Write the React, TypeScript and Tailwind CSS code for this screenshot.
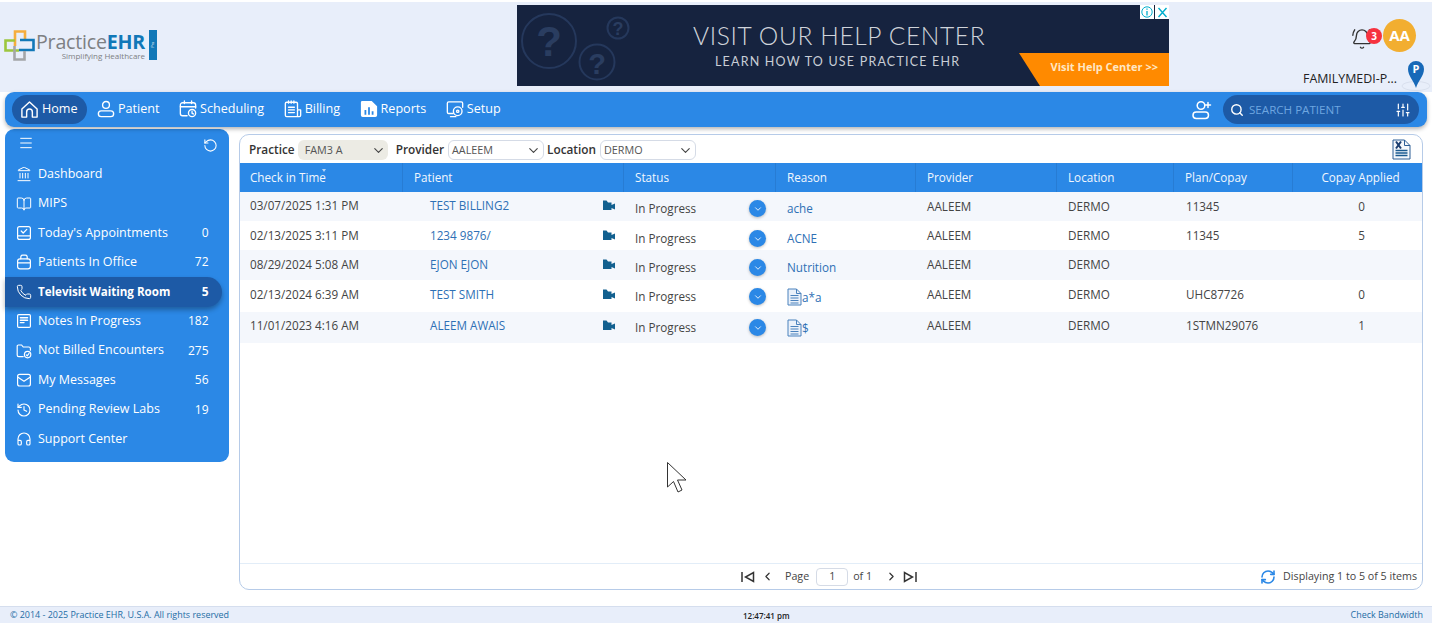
import React from "react";
import {
  Menu, RotateCcw, Landmark, BookOpen, Phone, History, Headphones, Search, SlidersVertical,
  BellRing, ChevronDown, ChevronLeft, ChevronRight, RefreshCw,
} from "lucide-react";

type IP = { size?: number; className?: string };
const Sv = ({ size = 18, className = "", children }: IP & { children: React.ReactNode }) => (
  <svg width={size} height={size} viewBox="0 0 20 20" fill="none" stroke="currentColor" strokeWidth="1.5" strokeLinecap="round" strokeLinejoin="round" className={`shrink-0 ${className}`}>
    {children}
  </svg>
);

const HomeI = (p: IP) => <Sv {...p}><path d="M2 9.5 L10 2 L18 9.5 V18 H13 V12.5 A3 3 0 0 0 7 12.5 V18 H2 Z" /></Sv>;
const PatientI = (p: IP) => <Sv {...p}><circle cx="10" cy="5.5" r="3.8" /><rect x="1.5" y="12" width="17" height="6.5" rx="3.2" /></Sv>;
const SchedI = (p: IP) => <Sv {...p}><path d="M9 17.5 H4 A2.5 2.5 0 0 1 1.5 15 V5.5 A2.5 2.5 0 0 1 4 3 H16 A2.5 2.5 0 0 1 18.5 5.5 V9" /><path d="M1.5 7.5 H18.5 M6 1 V4 M14 1 V4" /><circle cx="14.5" cy="14.5" r="4" /><path d="M14.5 12.8 V14.8 L16 15.5" /></Sv>;
const BillI = (p: IP) => <Sv {...p}><path d="M15 10 V4 A1.5 1.5 0 0 0 13.5 2.5 H3 A1.5 1.5 0 0 0 1.5 4 V17 A1.5 1.5 0 0 0 3 18.5 H17 A1.5 1.5 0 0 0 18.5 17 V11 H15 V18" /><path d="M5 1 V3.5 M8 1 V3.5 M11 1 V3.5 M5 8 H11.5 M5 11 H11.5 M5 14 H11.5" /></Sv>;
const ReportI = ({ size = 18, className = "" }: IP) => (
  <svg width={size} height={size} viewBox="0 0 20 20" className={`shrink-0 ${className}`}>
    <path fillRule="evenodd" d="M2.5 1 H13 L19 7 V17 A2 2 0 0 1 17 19 H3 A2 2 0 0 1 1 17 V2.5 A1.5 1.5 0 0 1 2.5 1 Z M5 11 V16.5 H7 V11 Z M9 8 V16.5 H11 V8 Z M13 12.5 V16.5 H15 V12.5 Z" fill="currentColor" />
  </svg>
);
const SetupI = (p: IP) => <Sv {...p}><path d="M8 15 H3 A1.5 1.5 0 0 1 1.5 13.5 V3.5 A1.5 1.5 0 0 1 3 2 H17 A1.5 1.5 0 0 1 18.5 3.5 V8" /><circle cx="13" cy="12.5" r="4.8" /><circle cx="13" cy="12.5" r="1.3" /><path d="M5 18.5 H11" /></Sv>;
const AddI = (p: IP) => <Sv {...p}><circle cx="9" cy="5.5" r="3.8" /><rect x="1" y="12" width="15.5" height="6.5" rx="3.2" /><path d="M16 2.5 V7.5 M13.5 5 H18.5" /></Sv>;
const ApptI = (p: IP) => <Sv {...p}><rect x="2" y="2" width="16" height="16" rx="2.5" /><path d="M2 13.5 H18 M6.5 7.5 L9 10 L13.5 5.5" /></Sv>;
const BagI = (p: IP) => <Sv {...p}><rect x="2" y="6" width="16" height="12.5" rx="3" /><path d="M6 6 V4 A2.5 2.5 0 0 1 8.5 1.5 H11.5 A2.5 2.5 0 0 1 14 4 V6 M2 11 H18" /></Sv>;
const NotesI = (p: IP) => <Sv {...p}><rect x="2" y="2" width="16" height="16" rx="1.5" /><path d="M5.5 6 H14.5 M5.5 9 H14.5 M5.5 12 H10" strokeWidth="1.8" /></Sv>;
const FolderI = (p: IP) => <Sv {...p}><path d="M9 17 H3.5 A2 2 0 0 1 1.5 15 V4 A1.5 1.5 0 0 1 3 2.5 H7 L9 5 H16 A2 2 0 0 1 18 7 V9" /><circle cx="14.5" cy="14.5" r="4" /><path d="M12.8 14.8 L14 16 L16.3 13" /></Sv>;
const MailI = (p: IP) => <Sv {...p}><rect x="2" y="3" width="16" height="14.5" rx="2.5" /><path d="M2.5 6.5 L10 11.5 L17.5 6.5" /></Sv>;

const nav = [
  { label: "Patient", Icon: PatientI },
  { label: "Scheduling", Icon: SchedI },
  { label: "Billing", Icon: BillI },
  { label: "Reports", Icon: ReportI },
  { label: "Setup", Icon: SetupI },
];

const side: { label: string; Icon: any; n: string; active?: boolean }[] = [
  { label: "Dashboard", Icon: (p: IP) => <Landmark size={p.size} strokeWidth={1.5} className="shrink-0" />, n: "" },
  { label: "MIPS", Icon: (p: IP) => <BookOpen size={p.size} strokeWidth={1.5} className="shrink-0" />, n: "" },
  { label: "Today's Appointments", Icon: ApptI, n: "0" },
  { label: "Patients In Office", Icon: BagI, n: "72" },
  { label: "Televisit Waiting Room", Icon: (p: IP) => <Phone size={p.size} strokeWidth={1.5} className="shrink-0" />, n: "5", active: true },
  { label: "Notes In Progress", Icon: NotesI, n: "182" },
  { label: "Not Billed Encounters", Icon: FolderI, n: "275" },
  { label: "My Messages", Icon: MailI, n: "56" },
  { label: "Pending Review Labs", Icon: (p: IP) => <History size={p.size} strokeWidth={1.7} className="shrink-0" />, n: "19" },
  { label: "Support Center", Icon: (p: IP) => <Headphones size={p.size} strokeWidth={1.7} className="shrink-0" />, n: "" },
];

const rows = [
  { h: "h-[29px]", bg: "bg-[#f4f7fc]", t: "03/07/2025 1:31 PM", p: "TEST BILLING2", r: "ache", doc: false, pl: "11345", c: "0", pt: "pt-[5px]", opt: "pt-[6px]", spt: "pt-[8px]" },
  { h: "h-[29px]", bg: "bg-white", t: "02/13/2025 3:11 PM", p: "1234 9876/", r: "ACNE", doc: false, pl: "11345", c: "5", pt: "pt-[6px]", opt: "pt-[6px]", spt: "pt-[9px]" },
  { h: "h-[30px]", bg: "bg-[#f4f7fc]", t: "08/29/2024 5:08 AM", p: "EJON EJON", r: "Nutrition", doc: false, pl: "", c: "", pt: "pt-[6px]", opt: "pt-[6px]", spt: "pt-[9px]" },
  { h: "h-[32px]", bg: "bg-white", t: "02/13/2024 6:39 AM", p: "TEST SMITH", r: "a*a", doc: true, pl: "UHC87726", c: "0", pt: "pt-[6px]", opt: "pt-[6px]", spt: "pt-[8px]" },
  { h: "h-[31px]", bg: "bg-[#f4f7fc]", t: "11/01/2023 4:16 AM", p: "ALEEM AWAIS", r: "$", doc: true, pl: "1STMN29076", c: "1", pt: "pt-[5px]", opt: "pt-[5px]", spt: "pt-[7px]" },
];

const heads = [
  { label: "Check in Time", w: "w-[163px]" },
  { label: "Patient", w: "w-[221px]" },
  { label: "Status", w: "w-[152px]" },
  { label: "Reason", w: "w-[140px]" },
  { label: "Provider", w: "w-[141px]" },
  { label: "Location", w: "w-[117px]" },
  { label: "Plan/Copay", w: "w-[119px]" },
  { label: "Copay Applied", w: "w-[129px]" },
];

function Cam() {
  return (
    <svg width="12" height="11" viewBox="0 0 12 11" className="shrink-0">
      <path d="M0 0.5 H3.5 L5 2.5 H8.5 V5 L12 3.5 V9.5 L8.5 8 V10 H0 Z" fill="#12608f" />
    </svg>
  );
}

function Doc() {
  return (
    <svg width="15" height="18" viewBox="0 0 15 18" className="shrink-0">
      <path d="M1 1 H9.5 L14 5.5 V17 H1 Z" fill="#eaf1fa" stroke="#4b82bd" strokeWidth="1" />
      <path d="M9.5 1 V5.5 H14" fill="none" stroke="#4b82bd" />
      <path d="M3.5 7.5H11.5M3.5 10H11.5M3.5 12.5H11.5M3.5 15H11.5" stroke="#4b82bd" strokeWidth="1" />
    </svg>
  );
}

function Logo() {
  return (
    <div className="flex items-start ml-[4px] mt-[28px]">
      <svg width="31" height="31" viewBox="0 0 31 31" className="shrink-0">
        <path d="M11 16 V1.5 H21 V10" fill="none" stroke="#f5ad3d" strokeWidth="2.6" />
        <path d="M16 10 H29.5 V20 H15" fill="none" stroke="#1178b8" strokeWidth="2.6" />
        <path d="M15 20.5 H1.5 V10.5 H11" fill="none" stroke="#9cc63e" strokeWidth="2.6" />
        <path d="M10.5 16 V29.5 H20.5 V21" fill="none" stroke="#a3a5a8" strokeWidth="2.6" />
      </svg>
      <div className="flex flex-col items-end ml-[1px] mt-[3px]">
        <div className="leading-[17px] text-[19.6px] font-['Open_Sans',sans-serif] tracking-[-0.2px] text-[#7d8083] whitespace-nowrap">
          Practice<span className="font-bold text-[#1178b8]">EHR</span>
        </div>
        <div className="leading-[9px] text-[8px] mt-[1px] text-[#7d8083] whitespace-nowrap">Simplifying Healthcare</div>
      </div>
      <div className="w-[8px] h-[30px] ml-[4px] bg-[#1178b8] flex items-center justify-center">
        <span className="text-[3.5px] text-white -rotate-90">Pro</span>
      </div>
    </div>
  );
}

function Ad() {
  return (
    <div className="relative w-[652px] h-[81px] mt-[3px] bg-[#16233f] overflow-hidden">
      <svg width="120" height="81" viewBox="0 0 120 81" className="absolute left-0 top-0">
        <circle cx="32" cy="36" r="27" fill="none" stroke="#25385c" strokeWidth="2" />
        <circle cx="80" cy="57" r="17.5" fill="none" stroke="#25385c" strokeWidth="2" />
        <circle cx="101" cy="23" r="10.5" fill="none" stroke="#25385c" strokeWidth="2" />
        <text x="32" y="51" textAnchor="middle" fontSize="42" fontWeight="700" fill="#2a3d60" fontFamily="Liberation Sans">?</text>
        <text x="80" y="69" textAnchor="middle" fontSize="29" fontWeight="700" fill="#2a3d60" fontFamily="Liberation Sans">?</text>
        <text x="101" y="30" textAnchor="middle" fontSize="18" fontWeight="700" fill="#2a3d60" fontFamily="Liberation Sans">?</text>
      </svg>
      <div className="absolute left-[176px] top-[17px] text-[24.6px] leading-[28px] font-light text-[#cfd3da] whitespace-nowrap font-['Lato',sans-serif] tracking-[0.6px]">VISIT OUR HELP CENTER</div>
      <div className="absolute left-[198px] top-[49px] text-[12.5px] leading-[16px] text-[#c9ced6] whitespace-nowrap font-['Lato',sans-serif] tracking-[1.2px]">LEARN HOW TO USE PRACTICE EHR</div>
      <svg width="150" height="33" viewBox="0 0 150 33" className="absolute right-0 bottom-0">
        <path d="M0 0 H150 V33 H21 Z" fill="#ff8a00" />
      </svg>
      <div className="absolute right-[11px] top-[55px] text-[11px] leading-[14px] font-bold text-[#ffe7c4] whitespace-nowrap font-['Open_Sans',sans-serif]">Visit Help Center &gt;&gt;</div>
      <div className="absolute right-0 top-0 flex">
        <div className="w-[14px] h-[14px] bg-white flex items-center justify-center">
          <svg width="12" height="12" viewBox="0 0 12 12"><circle cx="6" cy="6" r="5.2" fill="none" stroke="#00aecd" /><path d="M6 5V9.4M6 2.6V3.8" stroke="#00aecd" strokeWidth="1.3" /></svg>
        </div>
        <div className="w-[14px] h-[14px] ml-px bg-white flex items-center justify-center">
          <svg width="11" height="11" viewBox="0 0 11 11"><path d="M1.5 1L9.5 10M9.5 1L1.5 10" stroke="#00aecd" strokeWidth="1.4" /></svg>
        </div>
      </div>
    </div>
  );
}

function Selectish({ v, w, bg, border }: { v: string; w: string; bg: string; border: string }) {
  return (
    <div className={`${w} ${bg} ${border} h-[20px] rounded-[6px] flex items-center justify-between pr-[2px] text-[10.8px] text-[#555] shrink-0`}>
      <span className="pt-[1px]">{v}</span>
      <ChevronDown size={15} strokeWidth={1.8} className="text-[#444] mt-[2px]" />
    </div>
  );
}

export default function App() {
  return (
    <div className="relative w-[1432px] h-[623px] overflow-hidden bg-white flex flex-col text-[11.7px] text-[#444] font-['Open_Sans',sans-serif]">
      {/* header */}
      <header className="h-[90px] mt-[2px] shrink-0 bg-[#e8eefa] flex">
        <div className="w-[517px] shrink-0"><Logo /></div>
        <Ad />
        <div className="relative flex-1">
          <BellRing size={22} strokeWidth={1.5} className="absolute left-[182px] top-[26px] text-[#333]" />
          <div className="absolute left-[197px] top-[26px] w-[16px] h-[16px] rounded-full bg-[#f6323f] flex items-center justify-center text-[10px] font-bold text-white leading-none">3</div>
          <div className="absolute left-[214px] top-[17px] w-[33px] h-[33px] rounded-full bg-[#f2ae30] flex items-center justify-center text-[15px] font-bold text-white leading-none">AA</div>
          <div className="absolute left-[134px] top-[69px] text-[12.4px] leading-[16px] text-[#222] whitespace-nowrap">FAMILYMEDI-P...</div>
          <svg width="30" height="30" viewBox="0 0 30 30" className="absolute left-[232px] top-[59px]">
            <ellipse cx="15" cy="25" rx="14" ry="4.5" fill="none" stroke="#d9e0ee" />
            <path d="M15 27 C13 20 7 15 7 8 A8 8 0 0 1 23 8 C23 15 17 20 15 27 Z" fill="#1769b8" />
            <text x="15" y="12" textAnchor="middle" fontSize="11" fontWeight="700" fill="#fff" fontFamily="Open Sans">P</text>
          </svg>
        </div>
      </header>

      {/* nav */}
      <nav className="h-[35px] mx-[5px] shrink-0 rounded-[9px] bg-[#2b88e6] shadow-[0_2px_4px_rgba(0,0,0,0.3)] flex items-center pl-[7px] pr-[8px] text-white text-[12.6px] z-10">
        <div className="h-[29px] w-[75px] rounded-full bg-[#1d5aa6] flex items-center pl-[8px] gap-[3px] mr-[10px]">
          <HomeI size={19} />
          <span>Home</span>
        </div>
        <div className="flex items-center gap-[19.5px]">
          {nav.map(({ label, Icon }) => (
            <div key={label} className="flex items-center gap-[3px]">
              <Icon size={18} />
              <span>{label}</span>
            </div>
          ))}
        </div>
        <AddI size={20} className="ml-auto mr-[11px]" />
        <div className="w-[196px] h-[29px] rounded-full bg-[#1d5aa6] flex items-center pl-[7px] pr-[8px]">
          <Search size={14} strokeWidth={2.4} />
          <span className="ml-[5px] text-[11.6px] text-[#6ea6e0]">SEARCH PATIENT</span>
          <SlidersVertical size={16} strokeWidth={1.8} className="ml-auto" />
        </div>
      </nav>

      {/* body */}
      <div className="flex-1 flex items-start pl-[5px] min-h-0">
        <aside className="w-[224px] h-[333px] mt-[2px] shrink-0 rounded-[9px] bg-[#2b88e6] text-white pt-[6px] text-[12.5px]">
          <div className="h-[24.4px] flex items-start justify-between pl-[13px] pr-[11px]">
            <Menu size={16} strokeWidth={1.5} />
            <RotateCcw size={15} strokeWidth={1.7} className="mt-[3px]" />
          </div>
          <div className="flex flex-col">
            {side.map(({ label, Icon, n, active }) => (
              <div
                key={label}
                className={`h-[29.45px] flex items-center pl-[11px] pr-[13.5px] w-[217px] ${active ? "bg-[#1d5aa6] rounded-r-full shadow-[0_3px_5px_rgba(0,0,0,0.3)] font-bold text-[11.6px]" : ""}`}
              >
                <Icon size={16} />
                <span className="ml-[6px] flex-1 whitespace-nowrap">{label}</span>
                <span className="text-[12px]">{n}</span>
              </div>
            ))}
          </div>
        </aside>

        <main className="w-[1184px] h-[456px] ml-[10px] mt-[7px] shrink-0 rounded-[10px] border border-[#b6cbe8] flex flex-col overflow-hidden">
          <div className="h-[28px] shrink-0 flex items-center pl-[9px] pr-[11px] pt-[1px] text-[11.8px]">
            <b className="font-semibold text-[#333]">Practice</b>
            <Selectish v="FAM3 A" w="w-[90px] ml-[3px] mr-[8px] pl-[7px]" bg="bg-[#ecebe4]" border="" />
            <b className="font-semibold text-[#333]">Provider</b>
            <Selectish v="AALEEM" w="w-[96px] ml-[4px] mr-[3px] pl-[3px]" bg="bg-white" border="border border-[#d5dbe6]" />
            <b className="font-semibold text-[#333]">Location</b>
            <Selectish v="DERMO" w="w-[96px] ml-[4px] pl-[3px]" bg="bg-white" border="border border-[#d5dbe6]" />
            <svg width="19" height="21" viewBox="0 0 19 21" className="ml-auto">
              <path d="M1 1 H12.5 L18 6.5 V20 H1 Z" fill="#f5f8fc" stroke="#2d5e96" />
              <path d="M12.5 1 V6.5 H18" fill="none" stroke="#2d5e96" />
              <path d="M4 2.5 L9 9.5 M9 2.5 L4 9.5" stroke="#1a3d70" strokeWidth="2" />
              <path d="M3.5 11.5H15.5M3.5 14H15.5M3.5 16.5H15.5" stroke="#1a5a90" strokeWidth="1.5" />
            </svg>
          </div>

          <div className="h-[29px] shrink-0 bg-[#2b88e6] flex text-[#f1f7fe]">
            {heads.map((h, i) => (
              <div key={h.label} className={`${h.w} shrink-0 flex items-center ${i === 7 ? "justify-center pl-[6px]" : i === 0 ? "pl-[10px] border-r border-[#277cd4]" : "pl-[11px] border-r border-[#277cd4]"} relative`}>
                {h.label}
                {i === 0 && <span className="absolute left-[82px] top-[6px] w-0 h-0 border-l-[2.5px] border-r-[2.5px] border-t-[3px] border-l-transparent border-r-transparent border-t-[#b8d6f5]" />}
              </div>
            ))}
          </div>

          <div className="flex-1 min-h-0">
            {rows.map((r) => (
              <div key={r.t} className={`${r.h} ${r.bg} flex items-start`}>
                <div className={`w-[163px] shrink-0 pl-[10px] ${r.pt}`}>{r.t}</div>
                <div className={`w-[221px] shrink-0 pl-[27px] pr-[9px] flex justify-between text-[#2e70b5] ${r.pt}`}>
                  <span>{r.p}</span>
                  <span className="pt-[3px]"><Cam /></span>
                </div>
                <div className={`w-[152px] shrink-0 pl-[11px] pr-[10px] flex items-center justify-between ${r.spt}`}>
                  <span className="leading-[17px]">In Progress</span>
                  <span className="w-[17px] h-[17px] rounded-full bg-[#2b88e6] flex items-center justify-center shadow-[0_1px_3px_rgba(0,0,0,0.25)]">
                    <ChevronDown size={10} className="text-white" />
                  </span>
                </div>
                <div className={`w-[140px] shrink-0 pl-[11px] flex items-end text-[#2e70b5] ${r.spt}`}>
                  {r.doc && <Doc />}
                  <span className="leading-[17px]">{r.r}</span>
                </div>
                <div className={`w-[141px] shrink-0 pl-[11px] ${r.opt}`}>AALEEM</div>
                <div className={`w-[117px] shrink-0 pl-[11px] ${r.opt}`}>DERMO</div>
                <div className={`w-[119px] shrink-0 pl-[12px] ${r.opt}`}>{r.pl}</div>
                <div className={`w-[129px] shrink-0 text-center pl-[8px] ${r.opt}`}>{r.c}</div>
              </div>
            ))}
          </div>

          <div className="h-[26px] shrink-0 border-t border-[#e2edf8] flex items-center text-[10.7px] text-[#444]">
            <svg width="14" height="12" viewBox="0 0 14 12" className="ml-[501px]"><path d="M1 1V11M12.5 1.5V10.5L4.5 6Z" fill="none" stroke="#333" strokeWidth="1.5" /></svg>
            <ChevronLeft size={13} strokeWidth={2.2} className="ml-[6px] text-[#333]" />
            <span className="ml-[11px]">Page</span>
            <div className="ml-[7px] w-[32px] h-[18px] rounded-[4px] border border-[#d5dbe6] flex items-center justify-center">1</div>
            <span className="ml-[5px]">of 1</span>
            <ChevronRight size={13} strokeWidth={2.2} className="ml-[13px] text-[#333]" />
            <svg width="14" height="12" viewBox="0 0 14 12" className="ml-[5px]"><path d="M13 1V11M1.5 1.5V10.5L9.5 6Z" fill="none" stroke="#333" strokeWidth="1.5" /></svg>
            <RefreshCw size={16} strokeWidth={2.4} className="ml-auto text-[#2b88e6]" />
            <span className="ml-[7px] mr-[5px]">Displaying 1 to 5 of 5 items</span>
          </div>
        </main>
      </div>

      {/* footer */}
      <footer className="h-[17px] shrink-0 bg-[#e8eefa] border-t border-[#d5deee] flex items-center pl-[10px] pr-[9px] text-[8.95px] text-[#1d6da5]">
        <span className="w-[733px]">© 2014 - 2025 Practice EHR, U.S.A. All rights reserved</span>
        <span className="text-[8px] font-semibold text-[#222] pt-[2px]">12:47:41 pm</span>
        <span className="ml-auto">Check Bandwidth</span>
      </footer>

      {/* cursor captured in the screenshot */}
      <svg width="24" height="34" viewBox="0 0 24 34" className="absolute left-[666px] top-[461px]">
        <path d="M1.5 1.5 V26 L7.5 20.5 L12 31 L16 29 L11.5 19 H20 Z" fill="#fff" stroke="#333" strokeWidth="1" />
      </svg>
    </div>
  );
}
